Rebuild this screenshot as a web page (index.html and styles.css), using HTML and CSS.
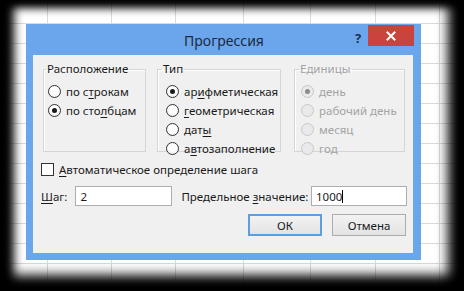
FILE: index.html
```html
<!DOCTYPE html>
<html lang="ru">
<head>
  <meta charset="UTF-8">
  <meta name="viewport" content="width=device-width, initial-scale=1.0">
  <title>Прогрессия</title>
  <link rel="stylesheet" href="styles.css">
</head>
<body>
  <div class="dialog">
    <div class="titlebar">
      <span class="title">Прогрессия</span>
      <span class="help">?</span>
      <span class="close">
        <svg width="10" height="10" viewBox="0 0 10 10"><path d="M1.5 1.5 L8.5 8.5 M8.5 1.5 L1.5 8.5" stroke="#fff" stroke-width="2" stroke-linecap="square"/></svg>
      </span>
    </div>

    <div class="client">
      <div class="groups">
        <fieldset class="group group-place">
          <legend>Расположение</legend>
          <div class="radio"><span class="mark"></span><span>по с<u>т</u>рокам</span></div>
          <div class="radio"><span class="mark checked"></span><span>по сто<u>л</u>бцам</span></div>
        </fieldset>

        <fieldset class="group group-type">
          <legend>Тип</legend>
          <div class="radio"><span class="mark checked"></span><span>ар<u>и</u>фметическая</span></div>
          <div class="radio"><span class="mark"></span><span><u>г</u>еометрическая</span></div>
          <div class="radio"><span class="mark"></span><span>дат<u>ы</u></span></div>
          <div class="radio"><span class="mark"></span><span>а<u>в</u>тозаполнение</span></div>
        </fieldset>

        <fieldset class="group group-units disabled">
          <legend>Единицы</legend>
          <div class="radio"><span class="mark checked"></span><span>день</span></div>
          <div class="radio"><span class="mark"></span><span>рабочий день</span></div>
          <div class="radio"><span class="mark"></span><span>месяц</span></div>
          <div class="radio"><span class="mark"></span><span>год</span></div>
        </fieldset>
      </div>

      <div class="check"><span class="box"></span><span><u>А</u>втоматическое определение шага</span></div>

      <div class="fields">
        <span class="field-label"><u>Ш</u>аг:</span>
        <span class="input input-step">2</span>
        <span class="field-label field-limit">Предельное <u>з</u>начение:</span>
        <span class="input input-limit"><span>1000</span><span class="caret"></span></span>
      </div>

      <div class="buttons">
        <span class="button default">ОК</span>
        <span class="button">Отмена</span>
      </div>
    </div>
  </div>

  <div class="vignette"></div>
</body>
</html>
```

FILE: styles.css
```css
body {
  margin: 0;
  width: 464px;
  height: 291px;
  overflow: hidden;
  position: relative;
  font-family: "Noto Sans", "DejaVu Sans", sans-serif;
  font-size: 11.5px;
  color: #1a1a1a;
  background-color: #fff;
  background-image:
    repeating-linear-gradient(to bottom, transparent 0, transparent 3px, #dadada 3px, #dadada 4px, transparent 4px, transparent 20px),
    linear-gradient(#dadada, #dadada),
    linear-gradient(#dadada, #dadada),
    linear-gradient(#dadada, #dadada),
    linear-gradient(#dadada, #dadada),
    linear-gradient(#dadada, #dadada),
    linear-gradient(#dadada, #dadada),
    linear-gradient(#dadada, #dadada);
  background-size: 100% 20px, 1px 100%, 1px 100%, 1px 100%, 1px 100%, 1px 100%, 1px 100%, 1px 100%;
  background-repeat: repeat-y, no-repeat, no-repeat, no-repeat, no-repeat, no-repeat, no-repeat, no-repeat;
  background-position: 0 0, 47px 0, 111px 0, 175px 0, 243px 0, 310px 0, 375px 0, 439px 0;
}

u {
  text-decoration: underline;
  text-underline-offset: 2px;
}

/* window */

.dialog {
  position: absolute;
  left: 26px;
  top: 24px;
  width: 380px;
  padding: 0 8px 7px 7px;
  background: #6ba6ec;
}

.titlebar {
  height: 31px;
  position: relative;
  display: flex;
  align-items: center;
  justify-content: center;
}

.title {
  font-size: 14px;
  color: #1b2a3f;
  margin-left: 2px;
  margin-top: 2px;
}

.help {
  position: absolute;
  left: 322px;
  top: 5px;
  font-size: 13px;
  font-weight: bold;
  color: #1c3150;
}

.close {
  position: absolute;
  right: -1px;
  top: 1px;
  width: 46px;
  height: 21px;
  background: #c9443d;
  display: flex;
  align-items: center;
  justify-content: center;
}

.close svg {
  display: block;
}

.client {
  height: 198px;
  background: #f0f0f0;
}

/* group boxes */

.groups {
  display: flex;
  padding: 6px 0 0 10px;
}

.group {
  margin: 0;
  height: 84px;
  padding: 5px 0 0 4px;
  border: 1px solid #d5d5d5;
  box-shadow: inset 1px 1px 0 #fff;
}

.group legend {
  padding: 0 1px;
  margin-left: -2px;
  line-height: 16px;
}

.group-place {
  width: 97px;
}

.group-type {
  width: 114px;
  margin-left: 11px;
  padding-left: 8px;
}

.group-type legend {
  margin-left: -4px;
}

.group-units {
  width: 103px;
  margin-left: 13px;
  padding-left: 6px;
}

.radio {
  height: 19px;
  display: flex;
  align-items: center;
  gap: 5px;
  white-space: nowrap;
}

.mark {
  width: 11px;
  height: 11px;
  border: 1px solid #333;
  border-radius: 50%;
  background: radial-gradient(circle at 50% 40%, #fff 40%, #e8e8e8 100%);
  display: flex;
  align-items: center;
  justify-content: center;
  flex-shrink: 0;
}

.mark.checked::after {
  content: "";
  width: 5px;
  height: 5px;
  border-radius: 50%;
  background: #1a1a1a;
}

.disabled {
  color: #a3a3a3;
}

.disabled .mark {
  border-color: #c8c8c8;
  background: #e9e9e9;
}

.disabled .mark.checked::after {
  background: #8c8c8c;
}

/* checkbox */

.check {
  display: flex;
  align-items: center;
  gap: 5px;
  margin: 11px 0 0 8px;
  height: 13px;
}

.box {
  width: 11px;
  height: 11px;
  border: 1px solid #333;
  background: #fff;
}

/* inputs */

.fields {
  display: flex;
  align-items: center;
  margin-top: 10px;
  padding-left: 8px;
  height: 20px;
}

.input {
  box-sizing: border-box;
  height: 20px;
  border: 1px solid #abadb3;
  background: #fff;
  padding: 0 4px;
  display: flex;
  align-items: center;
}

.input-step {
  width: 97px;
  margin-left: 8px;
}

.field-limit {
  margin-left: 9px;
}

.input-limit {
  width: 96px;
  margin-left: auto;
  margin-right: 6px;
}

.caret {
  width: 1px;
  height: 13px;
  background: #000;
}

/* buttons */

.buttons {
  display: flex;
  justify-content: flex-end;
  gap: 10px;
  margin-top: 8px;
  padding-right: 7px;
}

.button {
  box-sizing: border-box;
  width: 74px;
  height: 22px;
  border: 1px solid #acacac;
  background: linear-gradient(#f2f2f2, #e3e3e3);
  display: flex;
  align-items: center;
  justify-content: center;
}

.button.default {
  border: 2px solid #5aa0e0;
}

/* dark frame round the shot */

.vignette {
  position: absolute;
  inset: 0;
  pointer-events: none;
  box-shadow:
    inset 16px 0 10px -2px #000,
    inset 0 10px 8px -2px #000,
    inset -18px 0 12px -2px #000,
    inset 0 -18px 12px -2px #000;
}
```
